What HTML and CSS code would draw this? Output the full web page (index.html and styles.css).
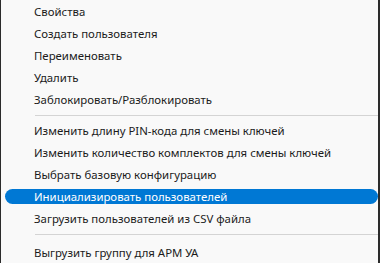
FILE: index.html
```html
<!DOCTYPE html>
<html lang="ru">
<head>
  <meta charset="UTF-8">
  <title>Меню</title>
  <link rel="stylesheet" href="styles.css">
</head>
<body>
  <div class="menu">
    <div class="item">Свойства</div>
    <div class="item">Создать пользователя</div>
    <div class="item">Переименовать</div>
    <div class="item">Удалить</div>
    <div class="item">Заблокировать/Разблокировать</div>
    <div class="separator"></div>
    <div class="item">Изменить длину PIN-кода для смены ключей</div>
    <div class="item">Изменить количество комплектов для смены ключей</div>
    <div class="item">Выбрать базовую конфигурацию</div>
    <div class="item active">Инициализировать пользователей</div>
    <div class="item">Загрузить пользователей из CSV файла</div>
    <div class="separator"></div>
    <div class="item last">Выгрузить группу для АРМ УА</div>
  </div>
</body>
</html>
```

FILE: styles.css
```css
html, body {
  height: 100%;
}

body {
  margin: 0;
  background: #f9f9f9;
  border-left: 1px solid #2b2b2b;
  border-right: 2px solid #2b2b2b;
  box-sizing: border-box;
  font-family: 'Noto Sans', 'Segoe UI', sans-serif;
  font-size: 11.4px;
  color: #1b1b1b;
  overflow: hidden;
}

.menu {
  display: flex;
  flex-direction: column;
  gap: 7px;
  padding-top: 4px;
}

.item {
  height: 15px;
  line-height: 15px;
  margin-left: 4px;
  padding-left: 29px;
  border-radius: 8px;
  white-space: nowrap;
}

.item.active {
  background-color: #0078d4;
  color: #ffffff;
}

.item.last {
  margin-top: 3px;
}

.separator {
  height: 1px;
  margin: 1px 0 0 34px;
  background-color: #d4d4d4;
}
```
